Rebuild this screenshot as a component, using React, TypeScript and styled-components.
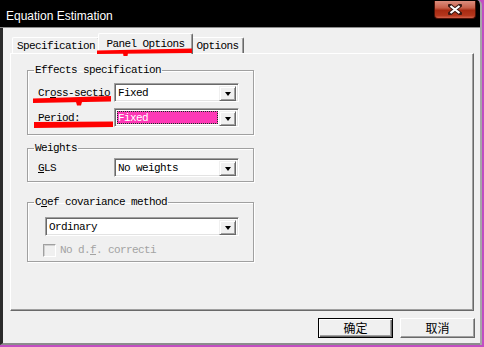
import React from 'react';
import styled, { createGlobalStyle } from 'styled-components';

const MONO = `"Liberation Mono", "Noto Sans CJK SC", monospace`;
const CJK = `"Noto Sans CJK SC", "Liberation Sans", sans-serif`;

const Global = createGlobalStyle`
  html, body { margin: 0; padding: 0; background: #c24dc2; }
  body { width: 484px; height: 347px; overflow: hidden; }
  * { box-sizing: border-box; }
`;

const Window = styled.div`
  position: relative;
  width: 482px;
  height: 345px;
  display: flex;
  flex-direction: column;
  background: #f0f0f0;
  border-right: 2px solid #a6a6a6;
  border-top-right-radius: 5px;
  overflow: hidden;
`;

const TitleBar = styled.div`
  flex: none;
  height: 28px;
  background: #000;
  border-bottom: 1px solid #8c8c8c;
  display: flex;
  align-items: flex-start;
`;

const Title = styled.span`
  margin: 9px 0 0 6px;
  font: 12px/14px "Liberation Sans", Arial, sans-serif;
  color: #fff;
`;

const CloseBtn = styled.div`
  margin: 1px 4px 0 auto;
  width: 42px;
  height: 18px;
  border: 1px solid #4a1208;
  border-top: none;
  border-radius: 0 0 4px 4px;
  background: linear-gradient(#dc8e7e 0%, #c8604a 40%, #a72a12 55%, #b4361c 85%, #d2604a 100%);
  display: flex;
  align-items: center;
  justify-content: center;
`;

const Body = styled.div`
  flex: 1;
  display: flex;
  flex-direction: column;
  border-left: 3px solid #2a2a2a;
  border-bottom: 2px solid #8c8c8c;
  padding: 5px 6px 0 7px;
`;

const TabStrip = styled.div`
  position: relative;
  z-index: 1;
  height: 20px;
  display: flex;
  align-items: flex-end;
  padding-left: 2px;
`;

const monoText = `
  font-family: ${MONO};
  font-size: 11px;
  letter-spacing: -0.6px;
`;

const Tab = styled.div<{ $w: number; $active?: boolean }>`
  position: relative;
  z-index: ${(p) => (p.$active ? 2 : 1)};
  width: ${(p) => p.$w + (p.$active ? 4 : 0)}px;
  height: ${(p) => (p.$active ? 21 : 16)}px;
  margin: 0 ${(p) => (p.$active ? -2 : 0)}px ${(p) => (p.$active ? -1 : 0)}px;
  background: #f0f0f0;
  border-top: 1px solid #fff;
  border-left: 1px solid #fff;
  border-right: 1px solid #696969;
  border-radius: 2px 2px 0 0;
  box-shadow: inset -1px 0 0 #a0a0a0;
  display: flex;
  align-items: center;
  justify-content: center;
  padding-bottom: ${(p) => (p.$active ? 1 : 0)}px;
  ${monoText}
  line-height: 12px;
  color: #000;
  white-space: nowrap;
`;

const Panel = styled.div`
  height: 258px;
  border-top: 1px solid #fff;
  border-left: 1px solid #fff;
  border-right: 1px solid #696969;
  border-bottom: 1px solid #696969;
  box-shadow: inset -1px -1px 0 #a0a0a0;
  padding: 10px 0 0 16px;
  display: flex;
  flex-direction: column;
  align-items: flex-start;
`;

const Group = styled.fieldset<{ $mt: number; $pt: number; $pb: number }>`
  width: 227px;
  min-width: 0;
  margin: ${(p) => p.$mt}px 0 0 0;
  padding: ${(p) => p.$pt}px 14px ${(p) => p.$pb}px 10px;
  border: 1px solid #a0a0a0;
  box-shadow: inset 1px 1px 0 #fff, 1px 1px 0 #fff;
  display: flex;
  flex-direction: column;
  gap: 6px;
`;

const Legend = styled.legend`
  margin-left: -4px;
  padding: 0 1px;
  ${monoText}
  line-height: 12px;
  color: #000;
`;

const Row = styled.div<{ $indent?: number; $mt?: number }>`
  display: flex;
  align-items: center;
  margin-left: ${(p) => p.$indent ?? 0}px;
  margin-top: ${(p) => p.$mt ?? 0}px;
`;

const Label = styled.span<{ $w: number }>`
  width: ${(p) => p.$w}px;
  white-space: nowrap;
  ${monoText}
  line-height: 14px;
  color: #000;
`;

const U = styled.span`
  text-decoration: underline;
  text-underline-offset: 1px;
`;

const Combo = styled.div<{ $w: number }>`
  width: ${(p) => p.$w}px;
  height: 19px;
  display: flex;
  padding: 2px;
  background: #fff;
  border-top: 1px solid #a0a0a0;
  border-left: 1px solid #a0a0a0;
  border-right: 1px solid #fff;
  border-bottom: 1px solid #fff;
  box-shadow: inset 1px 1px 0 #696969, inset -1px -1px 0 #e3e3e3;
`;

const ComboValue = styled.div<{ $focused?: boolean }>`
  flex: 1;
  display: flex;
  align-items: center;
  padding-left: 1px;
  margin-right: 1px;
  ${monoText}
  line-height: 14px;
  color: ${(p) => (p.$focused ? '#fff' : '#000')};
  background: ${(p) => (p.$focused ? '#fe38b6' : '#fff')};
  outline: ${(p) => (p.$focused ? '1px dotted #0b3d1f' : 'none')};
  outline-offset: -1px;
`;

const DropBtn = styled.div`
  width: 17px;
  height: 15px;
  background: #f0f0f0;
  border-top: 1px solid #f0f0f0;
  border-left: 1px solid #f0f0f0;
  border-right: 1px solid #696969;
  border-bottom: 1px solid #696969;
  box-shadow: inset 1px 1px 0 #fff, inset -1px -1px 0 #a0a0a0;
  display: flex;
  align-items: center;
  justify-content: center;
  &::after {
    content: '';
    width: 0;
    height: 0;
    border-left: 3.5px solid transparent;
    border-right: 3.5px solid transparent;
    border-top: 4px solid #000;
  }
`;

const Check = styled.span`
  width: 13px;
  height: 13px;
  margin-right: 4px;
  background: #f0f0f0;
  border-top: 1px solid #a0a0a0;
  border-left: 1px solid #a0a0a0;
  border-right: 1px solid #fff;
  border-bottom: 1px solid #fff;
  box-shadow: inset 1px 1px 0 #d0d0d0;
`;

const DisabledLabel = styled(Label)`
  color: #a3a3a3;
`;

const Footer = styled.div`
  display: flex;
  justify-content: flex-end;
  gap: 7px;
  margin-top: 7px;
  margin-right: -1px;
`;

const Button = styled.div<{ $default?: boolean }>`
  width: 75px;
  height: 20px;
  display: flex;
  align-items: center;
  justify-content: center;
  font: 12px/14px ${CJK};
  color: #000;
  background: #f0f0f0;
  border: 1px solid;
  border-color: ${(p) => (p.$default ? '#000' : '#fff #696969 #696969 #fff')};
  box-shadow: ${(p) =>
    p.$default
      ? 'inset 1px 1px 0 #fff, inset -1px -1px 0 #696969, inset -2px -2px 0 #a0a0a0'
      : 'inset -1px -1px 0 #a0a0a0'};
`;

const Marks = styled.svg`
  position: absolute;
  left: 0;
  top: 0;
  width: 482px;
  height: 345px;
  pointer-events: none;
  z-index: 5;
`;

export default function App() {
  return (
    <>
      <Global />
      <Window>
        <TitleBar>
          <Title>Equation Estimation</Title>
          <CloseBtn>
            <svg width="14" height="11" viewBox="0 0 14 11">
              <path d="M2 1.5 L12 9.5 M12 1.5 L2 9.5" stroke="#3a1a14" strokeWidth="4" strokeLinecap="square" />
              <path d="M2.5 2 L11.5 9 M11.5 2 L2.5 9" stroke="#fff" strokeWidth="2.2" />
            </svg>
          </CloseBtn>
        </TitleBar>
        <Body>
          <TabStrip>
            <Tab $w={88}>Specification</Tab>
            <Tab $w={91} $active>Panel Options</Tab>
            <Tab $w={53}>Options</Tab>
          </TabStrip>
          <Panel>
            <Group $mt={0} $pt={7} $pb={7}>
              <Legend>Effects specification</Legend>
              <Row>
                <Label $w={76}>Cr<U>o</U>ss-sectio</Label>
                <Combo $w={125}>
                  <ComboValue>Fixed</ComboValue>
                  <DropBtn />
                </Combo>
              </Row>
              <Row>
                <Label $w={76}><U>P</U>eriod:</Label>
                <Combo $w={125}>
                  <ComboValue $focused>Fixed</ComboValue>
                  <DropBtn />
                </Combo>
              </Row>
            </Group>
            <Group $mt={7} $pt={4} $pb={4}>
              <Legend>Weights</Legend>
              <Row>
                <Label $w={76}><U>G</U>LS</Label>
                <Combo $w={125}>
                  <ComboValue>No weights</ComboValue>
                  <DropBtn />
                </Combo>
              </Row>
            </Group>
            <Group $mt={14} $pt={9} $pb={4}>
              <Legend>C<U>o</U>ef covariance method</Legend>
              <Row $indent={7}>
                <Combo $w={194}>
                  <ComboValue>Ordinary</ComboValue>
                  <DropBtn />
                </Combo>
              </Row>
              <Row $indent={5} $mt={1}>
                <Check />
                <DisabledLabel $w={100}>No d.<U>f</U>. correcti</DisabledLabel>
              </Row>
            </Group>
          </Panel>
          <Footer>
            <Button $default>确定</Button>
            <Button>取消</Button>
          </Footer>
        </Body>
        <Marks viewBox="0 0 482 345">
          <polygon points="97,50.5 192,48.5 192,53 97,54" fill="#ff0000" />
          <polygon points="123,53 128,53 127.5,56 123.5,56" fill="#ff0000" />
          <polygon points="33,98.5 111,96 111,101.5 33,103" fill="#ff0000" />
          <polygon points="76,102 82,102 81,105.5 77,105.5" fill="#ff0000" />
          <polygon points="34,122 113,121.5 113,127 34,128" fill="#ff0000" />
        </Marks>
      </Window>
    </>
  );
}
